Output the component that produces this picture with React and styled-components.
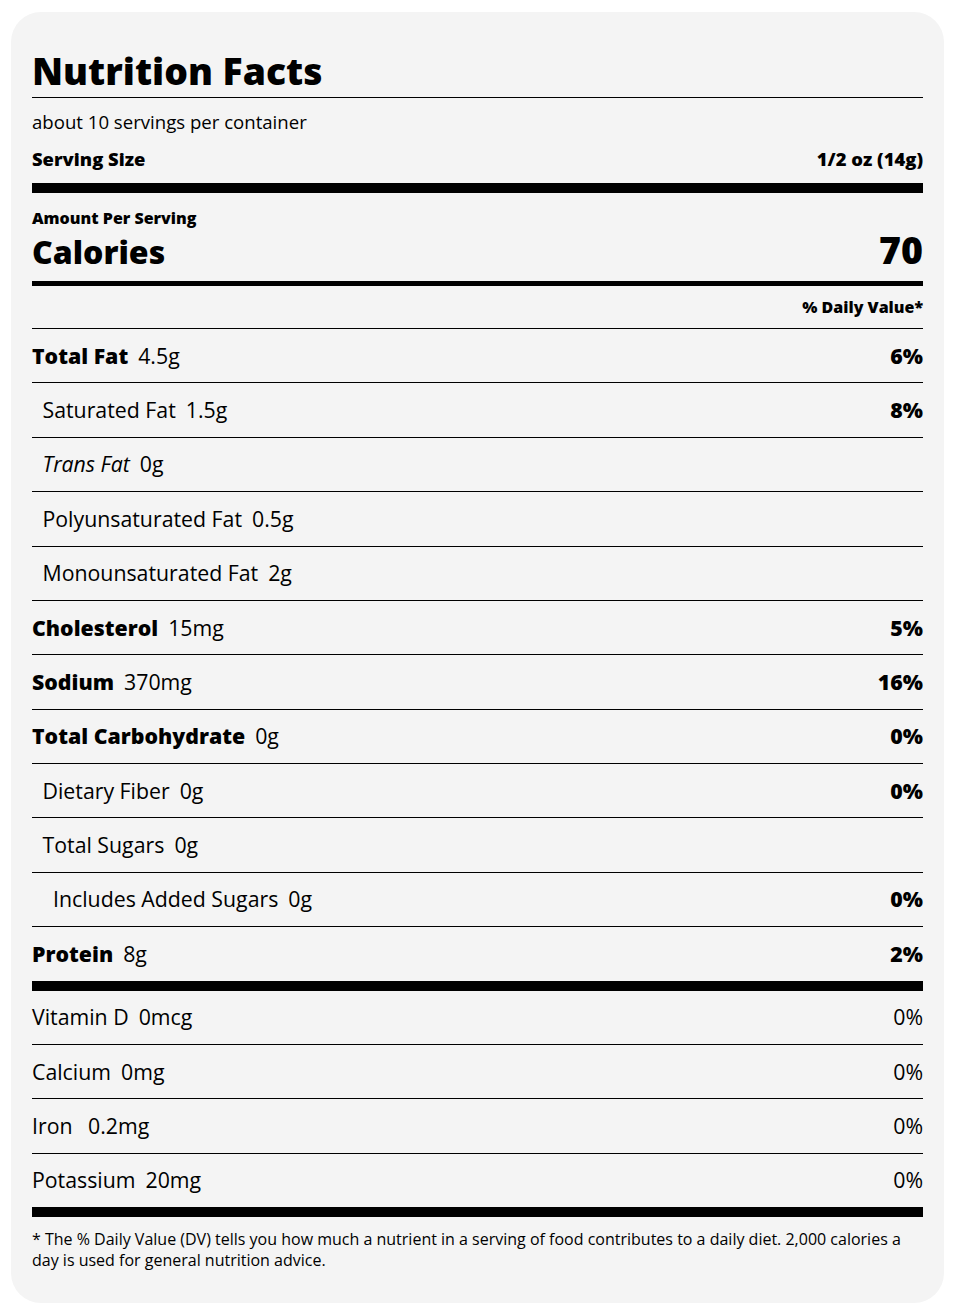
import { createGlobalStyle, styled } from "styled-components"

const GlobalStyle = createGlobalStyle`
  html, body {
    margin: 0;
    padding: 0;
    background: #ffffff;
  }
  body {
    font-family: "Open Sans", "Liberation Sans", sans-serif;
    color: #000;
  }
`

const Page = styled.div`
  padding: 12px 12px 12px 11px;
`

const Label = styled.section`
  background: #f4f4f4;
  border-radius: 30px;
  padding: 33px 21px 32px 21px;
`

const Title = styled.h1`
  margin: 0;
  font-size: 37.3px;
  font-weight: 800;
  line-height: 52px;
  border-bottom: 1px solid #000;
`

const Servings = styled.div`
  font-size: 18.6px;
  line-height: 24px;
  margin-top: 12px;
`

const SplitRow = styled.div`
  display: flex;
  justify-content: space-between;
  align-items: baseline;
`

const ServingSize = styled(SplitRow)`
  font-size: 18.4px;
  font-weight: 800;
  line-height: 24px;
  margin-top: 13px;
  padding-bottom: 12px;
`

const Bar = styled.div`
  height: ${(p) => p.$h}px;
  background: #000;
`

const Amount = styled.div`
  font-size: 16px;
  font-weight: 800;
  line-height: 20px;
  margin-top: 15px;
`

const CaloriesRow = styled(SplitRow)`
  font-weight: 800;
  line-height: 44px;
  margin-bottom: 7px;
`

const CaloriesLabel = styled.span`
  font-size: 32px;
`

const CaloriesValue = styled.span`
  font-size: 37.5px;
`

const DvHeader = styled.div`
  text-align: right;
  font-size: 16px;
  font-weight: 800;
  line-height: 20px;
  padding: 11px 0 11px;
  border-bottom: 1px solid #000;
`

const Row = styled.div`
  display: flex;
  justify-content: space-between;
  align-items: baseline;
  font-size: 21.3px;
  line-height: 30px;
  padding: 11.7px 0 11.7px ${(p) => p.$indent * 10.5}px;
  border-bottom: ${(p) => (p.$last ? "none" : "1px solid #000")};
`

const Name = styled.span`
  font-weight: ${(p) => (p.$bold ? 800 : 400)};
  font-style: ${(p) => (p.$italic ? "italic" : "normal")};
  margin-right: 10px;
`

const Pct = styled.span`
  font-weight: ${(p) => (p.$bold ? 800 : 400)};
`

const Footnote = styled.p`
  margin: 12px 0 0;
  font-size: 16px;
  line-height: 21px;
`

const nutrients = [
  { name: "Total Fat", amount: "4.5g", dv: "6%", bold: true },
  { name: "Saturated Fat", amount: "1.5g", dv: "8%", indent: 1 },
  { name: "Trans Fat", amount: "0g", indent: 1, italic: true },
  { name: "Polyunsaturated Fat", amount: "0.5g", indent: 1 },
  { name: "Monounsaturated Fat", amount: "2g", indent: 1 },
  { name: "Cholesterol", amount: "15mg", dv: "5%", bold: true },
  { name: "Sodium", amount: "370mg", dv: "16%", bold: true },
  { name: "Total Carbohydrate", amount: "0g", dv: "0%", bold: true },
  { name: "Dietary Fiber", amount: "0g", dv: "0%", indent: 1 },
  { name: "Total Sugars", amount: "0g", indent: 1 },
  { name: "Includes Added Sugars", amount: "0g", dv: "0%", indent: 2 },
  { name: "Protein", amount: "8g", dv: "2%", bold: true },
]

const vitamins = [
  { name: "Vitamin D", amount: "0mcg", dv: "0%" },
  { name: "Calcium", amount: "0mg", dv: "0%" },
  { name: "Iron", amount: " 0.2mg", dv: "0%" },
  { name: "Potassium", amount: "20mg", dv: "0%" },
]

function App() {
  return (
    <Page>
      <GlobalStyle />
      <Label>
        <Title>Nutrition Facts</Title>
        <Servings>about 10 servings per container</Servings>
        <ServingSize>
          <span>Serving Size</span>
          <span>1/2 oz (14g)</span>
        </ServingSize>
        <Bar $h={10} />
        <Amount>Amount Per Serving</Amount>
        <CaloriesRow>
          <CaloriesLabel>Calories</CaloriesLabel>
          <CaloriesValue>70</CaloriesValue>
        </CaloriesRow>
        <Bar $h={5} />
        <DvHeader>% Daily Value*</DvHeader>
        {nutrients.map((n, i) => (
          <Row key={n.name} $indent={n.indent || 0} $last={i === nutrients.length - 1}>
            <span>
              <Name $bold={n.bold} $italic={n.italic}>{n.name}</Name>
              {n.amount}
            </span>
            <Pct $bold>{n.dv}</Pct>
          </Row>
        ))}
        <Bar $h={10} />
        {vitamins.map((v, i) => (
          <Row key={v.name} $indent={0} $last={i === vitamins.length - 1}>
            <span>
              <Name>{v.name}</Name>
              {v.amount}
            </span>
            <Pct>{v.dv}</Pct>
          </Row>
        ))}
        <Bar $h={10} />
        <Footnote>
          * The % Daily Value (DV) tells you how much a nutrient in a serving of food
          contributes to a daily diet. 2,000 calories a day is used for general
          nutrition advice.
        </Footnote>
      </Label>
    </Page>
  )
}

export default App
